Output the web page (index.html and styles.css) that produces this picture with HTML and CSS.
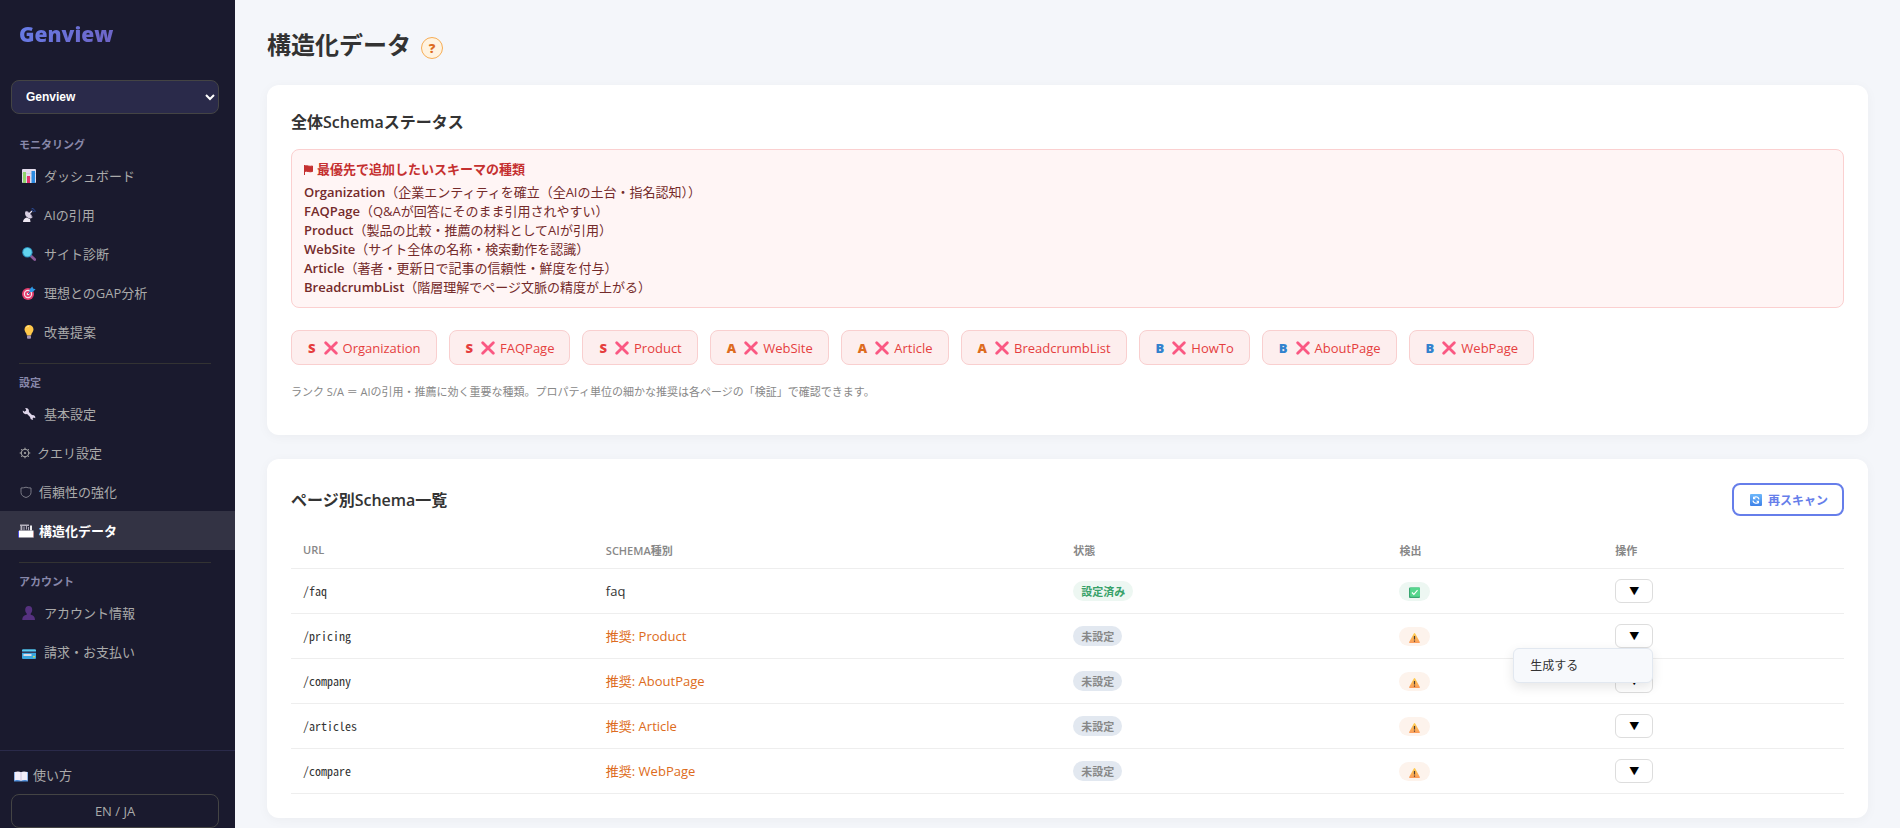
FILE: index.html
```html
<!DOCTYPE html>
<html lang="ja">
<head>
<meta charset="utf-8">
<meta name="viewport" content="width=device-width, initial-scale=1">
<title>構造化データ - Genview</title>
<link rel="stylesheet" href="styles.css">
</head>
<body>
<svg class="sprite" aria-hidden="true">
  <defs>
    <linearGradient id="g-warn" x1="0" y1="0" x2="0" y2="1"><stop offset="0" stop-color="#ffd04f"/><stop offset="1" stop-color="#fb9b5b"/></linearGradient>
    <linearGradient id="g-blue" x1="0" y1="0" x2="0" y2="1"><stop offset="0" stop-color="#6cb8fb"/><stop offset="1" stop-color="#3f82e8"/></linearGradient>
  </defs>
  <symbol id="i-cross" viewBox="0 0 14 14"><path d="M1.700 1.700l10.600 10.600M12.300 1.700L1.700 12.300" stroke="#fa5882" stroke-width="2.800" stroke-linecap="round"/></symbol>
  <symbol id="i-warn" viewBox="0 0 12 12"><path d="M6 1.200c.4 0 .7.300.9.600l4.900 9c.3.600 0 1.100-.6 1.100H.800c-.6 0-.9-.5-.6-1.100L5.100 1.800c.2-.3.500-.6.900-.6z" fill="url(#g-warn)"/><path d="M6 4.300v3.800M6 9.300v1.200" stroke="#4b3a35" stroke-width="1.300"/></symbol>
  <symbol id="i-check" viewBox="0 0 12 12"><rect x="0" y=".5" width="12" height="11.500" rx="1" fill="#3aa672"/><rect x="1.200" y=".5" width="10.800" height="10" rx=".8" fill="#56d68d"/><path d="M3.200 6l2.100 2.100 4-4.600" fill="none" stroke="#fff" stroke-width="1.200"/></symbol>
  <symbol id="i-rescan" viewBox="0 0 12 12"><rect width="12" height="12" rx="1" fill="url(#g-blue)"/><path d="M9 5.400A3 3 0 0 0 4 3.600M3 6.600a3 3 0 0 0 5 1.800" fill="none" stroke="#fff" stroke-width="1.300"/><path d="M3 2.200v3h3zM9 9.800v-3H6z" fill="#fff"/></symbol>
</svg>

<div class="app">
  <aside class="sidebar">
    <div class="logo">Genview</div>
    <select class="site-select" aria-label="サイト"><option>Genview</option></select>

    <nav class="nav">
      <h2 class="nav-label">モニタリング</h2>
      <a class="nav-item" href="#"><svg class="icon icon-wide" viewBox="0 0 14 14"><rect width="14" height="14" rx="1" fill="#e3dcec"/><path d="M0 4.500h14M0 9h14" stroke="#c9bfd6" stroke-width=".6"/><rect x="1" y="3" width="3" height="11" fill="#8fd46b"/><rect x="5" y="7" width="3" height="7" fill="#e2336f"/><rect x="9.500" y="2" width="3.500" height="12" fill="#2d8be0"/></svg>ダッシュボード</a>
      <a class="nav-item" href="#"><svg class="icon icon-wide" viewBox="0 0 14 14"><path d="M3.500 3.500c1.500-1 7 4 6.500 6.500-3.500 1.700-8.500-2.500-6.500-6.500z" fill="#d8d0e2"/><path d="M4 3.500c1.500-.8 6.500 3.800 6 6.200" fill="none" stroke="#a79db8"/><path d="M1 14c0-2 1.500-4 3.500-4.500L8 11l.5 3z" fill="#eee8f3"/><path d="M7 6l3-3" stroke="#e8e0ee" stroke-width="1.200"/><path d="M9.500 2.200c1.200 0 2 .8 2 2M9.700.5c2 0 3.400 1.500 3.400 3.500" fill="none" stroke="#2d4f9e"/></svg>AIの引用</a>
      <a class="nav-item" href="#"><svg class="icon icon-wide" viewBox="0 0 14 14"><path d="M9 9l3.700 3.500" stroke="#8a5a97" stroke-width="2.800" stroke-linecap="round"/><circle cx="5.400" cy="5.300" r="5.200" fill="#2e91bd"/><circle cx="5.400" cy="5.300" r="4.200" fill="#62d4ee"/></svg>サイト診断</a>
      <a class="nav-item" href="#"><svg class="icon icon-wide" viewBox="0 0 14 14"><circle cx="6" cy="8" r="6" fill="#e33d6d"/><circle cx="6" cy="8" r="4.200" fill="#f3e3eb"/><circle cx="6" cy="8" r="3" fill="#e33d6d"/><circle cx="6" cy="8" r="1.300" fill="#f3e3eb"/><path d="M6 8l3-3" stroke="#1f67ad"/><path d="M7.500 6V3.500L10.300.5l.8 2 2.500.7L10.700 6z" fill="#2e9be8"/></svg>理想とのGAP分析</a>
      <a class="nav-item" href="#"><svg class="icon icon-wide" viewBox="0 0 14 14"><path d="M7 0a4.500 4.500 0 0 0-4.500 4.500C2.500 7 4.600 7.800 4.900 10.500h4.200C9.400 7.800 11.500 7 11.500 4.500A4.500 4.500 0 0 0 7 0z" fill="#ffc84a"/><path d="M4.500 2.500A3 3 0 0 1 7 1.200" fill="none" stroke="#ffe79c"/><rect x="5" y="10.500" width="4" height="3.300" rx="1" fill="#a394b3"/></svg>改善提案</a>

      <hr class="nav-rule">
      <h2 class="nav-label">設定</h2>
      <a class="nav-item" href="#"><svg class="icon icon-wide" viewBox="0 0 14 14"><path d="M4 4l6.500 6.500" stroke="#dfd6ea" stroke-width="2.600"/><path d="M3.200 1a3.100 3.100 0 1 1-2.400 2.500l2 1.200 1.500-1.500z" fill="#dfd6ea"/><path d="M9 12.300a2.500 2.500 0 1 1 4.200-1.100l-1.600-.6-1 1 .6 1.500z" fill="#dfd6ea"/></svg>基本設定</a>
      <a class="nav-item" href="#"><svg class="icon icon-gear" viewBox="0 0 11 14"><circle cx="5.500" cy="7" r="3.800" fill="none" stroke="#aaa"/><circle cx="5.500" cy="7" r="1.100" fill="#aaa"/><path d="M5.500 1.700v1.500M5.500 10.800v1.500M.2 7h1.500M9.300 7h1.500M1.700 3.200l1.100 1.100M8.200 9.700l1.100 1.100M9.300 3.200L8.200 4.300M2.800 9.700l-1.100 1.100" stroke="#aaa"/></svg>クエリ設定</a>
      <a class="nav-item" href="#"><svg class="icon icon-shield" viewBox="0 0 14 14"><path d="M2 3c2 0 3.500-.3 5-.8 1.500.5 3 .8 5 .8v4.500c0 2.600-2.200 4.200-5 5-2.800-.8-5-2.400-5-5z" fill="none" stroke="#858590" stroke-width=".9"/></svg>信頼性の強化</a>
      <a class="nav-item is-active" href="#" aria-current="page"><svg class="icon icon-site" viewBox="0 0 16 14"><path d="M1 6.500h14.500v7H1z" fill="#fff"/><path d="M2 .5h9V2H2zM2.500 2h1.800v4.500H2.500z" fill="#b5b2be"/><path d="M6 2.500v4M8.500 2v3.500M10.500 3v3.500" stroke="#aaa6b6"/><path d="M12 1.500h2v5h-2z" fill="#eee"/><path d="M.5 7v6.500" stroke="#4a4ee0"/><path d="M15.500 8v5.500" stroke="#d98a80" stroke-width=".6"/></svg>構造化データ</a>

      <hr class="nav-rule">
      <h2 class="nav-label">アカウント</h2>
      <a class="nav-item" href="#"><svg class="icon icon-wide" viewBox="0 0 14 14"><path d="M6.700 0c2.300 0 3.600 1.500 3.500 3.700 0 1.700-.6 3-1.500 3.800v1.200c2.500.6 4.300 1.700 4.300 5.300H.3c0-3.600 1.900-4.700 4.400-5.300V7.500C3.800 6.700 3.200 5.400 3.200 3.700 3.200 1.500 4.400 0 6.700 0z" fill="#55317f"/></svg>アカウント情報</a>
      <a class="nav-item" href="#"><svg class="icon icon-wide" viewBox="0 0 14 14"><rect y="4.500" width="14" height="9.500" rx="1" fill="#3aa6df"/><rect y="4.500" width="14" height="2" rx="1" fill="#58cdf2"/><rect y="6.500" width="14" height="1.500" fill="#333c5e"/><rect x="1.500" y="9" width="8" height="2" fill="#d9dbe8"/><rect x="11" y="11" width="2" height="1.500" fill="#b9d866"/></svg>請求・お支払い</a>
    </nav>

    <div class="side-foot">
      <a class="help-link" href="#"><svg class="icon" viewBox="0 0 14 14"><path d="M0 4h14v9.500H0z" fill="#4c8edb"/><path d="M.6 4C3 3.300 5.500 3.300 7 4.200c1.500-.9 4-.9 6.400-.2v8.500C11 11.900 8.500 12 7 12.800 5.500 12 3 11.900.6 12.500z" fill="#f3eef9"/><path d="M7 4.200v8.500" stroke="#c8bddb" stroke-width=".8"/></svg>使い方</a>
      <button class="lang-button" type="button">EN / JA</button>
    </div>
  </aside>

  <main class="main">
    <header class="page-head">
      <h1>構造化データ</h1>
      <button class="help-button" type="button" aria-label="ヘルプ">?</button>
    </header>

    <section class="card status-card">
      <h2>全体Schemaステータス</h2>
      <div class="alert">
        <p class="alert-title"><svg class="flag" viewBox="0 0 9 10" aria-hidden="true"><path d="M.5 0v10M.5 1C3 0 5 2 8.500 1v5.500C5 7.500 3 5.500.5 6.500z" fill="#c53030" stroke="#c53030"/></svg>最優先で追加したいスキーマの種類</p>
        <ul>
          <li><b>Organization</b>（企業エンティティを確立（全AIの土台・指名認知））</li>
          <li><b>FAQPage</b>（Q&amp;Aが回答にそのまま引用されやすい）</li>
          <li><b>Product</b>（製品の比較・推薦の材料としてAIが引用）</li>
          <li><b>WebSite</b>（サイト全体の名称・検索動作を認識）</li>
          <li><b>Article</b>（著者・更新日で記事の信頼性・鮮度を付与）</li>
          <li><b>BreadcrumbList</b>（階層理解でページ文脈の精度が上がる）</li>
        </ul>
      </div>
      <ul class="chips">
        <li class="chip"><b class="rank-s">S</b><svg><use href="#i-cross"/></svg>Organization</li>
        <li class="chip"><b class="rank-s">S</b><svg><use href="#i-cross"/></svg>FAQPage</li>
        <li class="chip"><b class="rank-s">S</b><svg><use href="#i-cross"/></svg>Product</li>
        <li class="chip"><b class="rank-a">A</b><svg><use href="#i-cross"/></svg>WebSite</li>
        <li class="chip"><b class="rank-a">A</b><svg><use href="#i-cross"/></svg>Article</li>
        <li class="chip"><b class="rank-a">A</b><svg><use href="#i-cross"/></svg>BreadcrumbList</li>
        <li class="chip"><b class="rank-b">B</b><svg><use href="#i-cross"/></svg>HowTo</li>
        <li class="chip"><b class="rank-b">B</b><svg><use href="#i-cross"/></svg>AboutPage</li>
        <li class="chip"><b class="rank-b">B</b><svg><use href="#i-cross"/></svg>WebPage</li>
      </ul>
      <p class="note">ランク S/A ＝ AIの引用・推薦に効く重要な種類。プロパティ単位の細かな推奨は各ページの「検証」で確認できます。</p>
    </section>

    <section class="card">
      <div class="card-head">
        <h2>ページ別Schema一覧</h2>
        <button class="rescan" type="button"><svg aria-hidden="true"><use href="#i-rescan"/></svg>再スキャン</button>
      </div>
      <table class="pages">
        <colgroup><col class="c-url"><col class="c-type"><col class="c-state"><col class="c-found"><col></colgroup>
        <thead><tr><th scope="col">URL</th><th scope="col">SCHEMA種別</th><th scope="col">状態</th><th scope="col">検出</th><th scope="col">操作</th></tr></thead>
        <tbody>
          <tr>
            <td class="url">/faq</td><td>faq</td>
            <td><span class="badge ok">設定済み</span></td>
            <td><span class="badge mark ok"><svg role="img" aria-label="検出済み"><use href="#i-check"/></svg></span></td>
            <td><button class="toggle" type="button" aria-label="/faq の操作">▼</button></td>
          </tr>
          <tr>
            <td class="url">/pricing</td><td class="suggest">推奨: Product</td>
            <td><span class="badge unset">未設定</span></td>
            <td><span class="badge mark warn"><svg role="img" aria-label="警告"><use href="#i-warn"/></svg></span></td>
            <td><div class="actions"><button class="toggle" type="button" aria-label="/pricing の操作" aria-expanded="true">▼</button><div class="menu"><button type="button">生成する</button></div></div></td>
          </tr>
          <tr>
            <td class="url">/company</td><td class="suggest">推奨: AboutPage</td>
            <td><span class="badge unset">未設定</span></td>
            <td><span class="badge mark warn"><svg role="img" aria-label="警告"><use href="#i-warn"/></svg></span></td>
            <td><button class="toggle" type="button" aria-label="/company の操作">▼</button></td>
          </tr>
          <tr>
            <td class="url">/articles</td><td class="suggest">推奨: Article</td>
            <td><span class="badge unset">未設定</span></td>
            <td><span class="badge mark warn"><svg role="img" aria-label="警告"><use href="#i-warn"/></svg></span></td>
            <td><button class="toggle" type="button" aria-label="/articles の操作">▼</button></td>
          </tr>
          <tr>
            <td class="url">/compare</td><td class="suggest">推奨: WebPage</td>
            <td><span class="badge unset">未設定</span></td>
            <td><span class="badge mark warn"><svg role="img" aria-label="警告"><use href="#i-warn"/></svg></span></td>
            <td><button class="toggle" type="button" aria-label="/compare の操作">▼</button></td>
          </tr>
        </tbody>
      </table>
    </section>
  </main>
</div>
</body>
</html>
```

FILE: styles.css
```css
* { box-sizing: border-box; margin: 0; padding: 0; }

body {
  font-family: "Open Sans", "Noto Sans CJK JP", sans-serif;
  font-size: 13px;
  color: #333;
  background: #f4f6fa;
}

button, select { font: inherit; cursor: pointer; }
ul { list-style: none; }
a { color: inherit; text-decoration: none; }
.sprite { position: absolute; width: 0; height: 0; }

.app { display: flex; align-items: flex-start; min-height: 100vh; }

/* Sidebar */
.sidebar {
  position: sticky;
  top: 0;
  display: flex;
  flex-direction: column;
  flex: 0 0 235px;
  height: 100vh;
  background: #1a1a2e;
  color: #aaa;
}

.logo {
  margin: 19px 19px 31px;
  font-size: 21px;
  font-weight: 800;
  line-height: 30px;
  background: linear-gradient(135deg, #667eea, #764ba2);
  background-clip: text;
  -webkit-background-clip: text;
  color: transparent;
}

.site-select {
  flex-shrink: 0;
  height: 34px;
  margin: 0 16px 20px 11px;
  padding: 0 10px;
  border: 1px solid #444;
  border-radius: 8px;
  background: #2a2a4a;
  color: #fff;
  font-family: "Liberation Sans", sans-serif;
  font-size: 12px;
  font-weight: 700;
}

.nav { flex: 1; }

.nav-label {
  padding: 0 19px;
  color: #8888aa;
  font-size: 11px;
  font-weight: 600;
  line-height: 22px;
}

.nav-item {
  display: flex;
  align-items: center;
  height: 39px;
  padding: 0 19px;
}

.nav-item.is-active { background: #333344; color: #fff; font-weight: 600; }
.nav-rule { margin: 12px 24px 8px 19px; border: 0; border-top: 1px solid #333; }

.icon { flex: none; width: 14px; height: 14px; }
.icon-wide { margin: 0 8px 0 3px; }
.icon-gear { width: 12px; margin-right: 6px; }
.icon-shield { margin-right: 6px; }
.icon-site { width: 16px; margin: 0 5px 0 -1px; }

.side-foot { padding: 12px 16px 0 11px; border-top: 1px solid #2a2a4a; }
.help-link { display: flex; align-items: center; gap: 5px; padding: 0 3px; line-height: 24px; margin-bottom: 7px; }

.lang-button {
  width: 100%;
  height: 34px;
  border: 1px solid #444;
  border-radius: 8px;
  background: none;
  color: #aaa;
  font-size: 13px;
}

/* Main column */
.main { flex: 1; min-width: 0; padding: 24px 32px 10px; }
.page-head { display: flex; align-items: center; gap: 10px; height: 41px; margin-bottom: 20px; }
h1 { font-size: 24px; line-height: 36px; }

.help-button {
  width: 22px;
  height: 22px;
  margin-top: 6px;
  border: 1px solid #f6ad55;
  border-radius: 50%;
  background: #fff3e0;
  color: #dd6b20;
  font-size: 13px;
  font-weight: 800;
  line-height: 20px;
}

.card {
  padding: 24px;
  border-radius: 12px;
  background: #fff;
  box-shadow: 0 2px 12px rgba(0, 0, 0, 0.04);
}

.card h2 { font-size: 16px; font-weight: 600; line-height: 26px; }
.status-card { margin-bottom: 24px; padding-bottom: 34px; }

.alert {
  margin: 14px 0 22px;
  padding: 10px 12px;
  border: 1px solid #fbd0d0;
  border-radius: 8px;
  background: #fff5f5;
  color: #742a2a;
  line-height: 19px;
}

.alert b { font-weight: 600; }
.alert-title { display: flex; align-items: center; gap: 4px; margin-bottom: 4px; color: #c53030; font-weight: 600; }
.flag { width: 9px; height: 10px; }

.chips { display: flex; flex-wrap: wrap; gap: 12px; }
.chip {
  display: flex;
  align-items: center;
  height: 35px;
  padding: 0 15px 0 16px;
  border: 1px solid #f9cfcf;
  border-radius: 8px;
  background: #fdeeee;
  color: #e53e3e;
  font-weight: 500;
}
.chip svg { width: 14px; height: 14px; margin: 0 5px 0 8px; }
.chip b { font-weight: 800; }
.chip .rank-s { color: #e53e3e; }
.chip .rank-a { color: #dd6b20; }
.chip .rank-b { color: #3182ce; }

.note { margin-top: 18px; color: #888; font-size: 11px; line-height: 18px; }

/* Page table */
.card-head { display: flex; align-items: center; justify-content: space-between; margin-bottom: 16px; }
.rescan {
  display: flex;
  align-items: center;
  gap: 6px;
  height: 33px;
  padding: 0 14px 0 16px;
  border: 2px solid #667eea;
  border-radius: 8px;
  background: #fff;
  color: #667eea;
  font-size: 12px;
  font-weight: 600;
}
.rescan svg { width: 12px; height: 12px; }

.pages { width: 100%; border-collapse: collapse; table-layout: fixed; }
.c-url { width: 19.5%; }
.c-type { width: 30.1%; }
.c-state { width: 21%; }
.c-found { width: 13.9%; }
.pages th {
  height: 36px;
  padding: 0 12px;
  border-bottom: 1px solid #eee;
  color: #888;
  font-size: 11px;
  font-weight: 600;
  text-align: left;
}
.pages td { height: 45px; padding: 0 12px; border-bottom: 1px solid #eee; }
.pages .url { font-family: "Noto Sans Mono CJK JP", "Liberation Mono", monospace; font-size: 12px; }
.pages .suggest { color: #dd6b20; }

.badge {
  display: inline-flex;
  align-items: center;
  height: 20px;
  padding: 0 8px;
  border-radius: 10px;
  font-size: 11px;
  font-weight: 600;
  vertical-align: middle;
}
.badge svg { width: 11px; height: 11px; }
.badge.mark { height: 19px; padding: 2px 10px 0; }
.ok { background: #edf7f2; color: #38a169; }
.unset { background: #e2e8f0; color: #888; }
.warn { background: #fdf3ec; }

.toggle {
  display: block;
  width: 38px;
  height: 24px;
  border: 1px solid #ddd;
  border-radius: 6px;
  background: #fff;
  color: #000;
  font-size: 10px;
  line-height: 20px;
}

.actions { position: relative; width: 38px; }
.menu {
  position: absolute;
  z-index: 2;
  top: 100%;
  right: 0;
  width: 140px;
  border: 1px solid #e2e8f0;
  border-radius: 6px;
  background: #f7f9fc;
  box-shadow: 0 4px 12px rgba(0, 0, 0, 0.1);
}
.menu button {
  display: block;
  width: 100%;
  height: 33px;
  padding: 0 16px;
  border: 0;
  background: none;
  color: #333;
  font-size: 12px;
  text-align: left;
}
```
